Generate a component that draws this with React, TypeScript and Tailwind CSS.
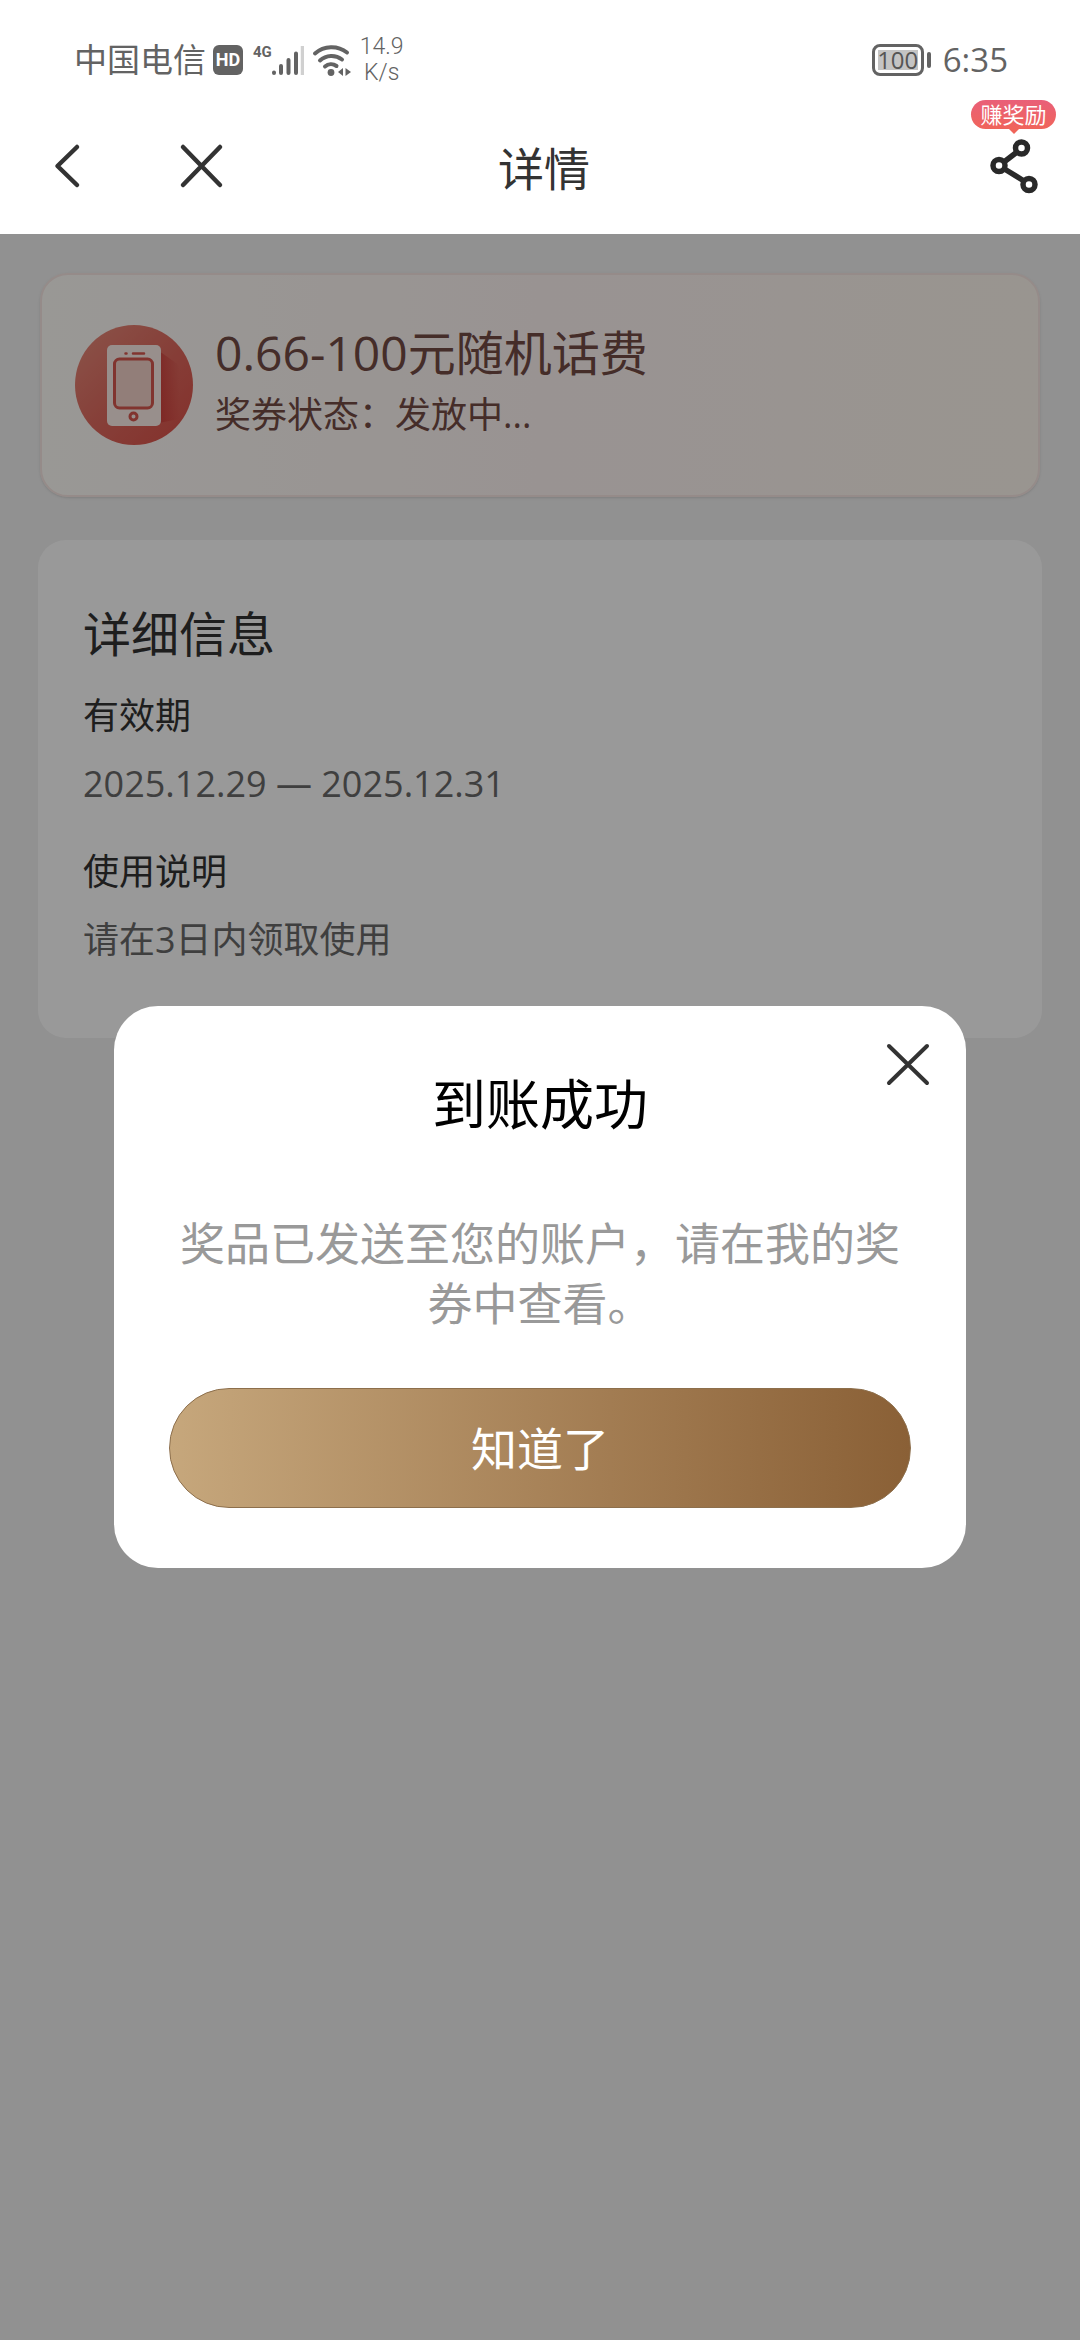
import React, { useState } from "react";

const StatusBar = () => {
  return (
    <div className="flex items-center justify-between h-[120px] pl-[74px] pr-[72px] text-[#636363]">
      <div className="flex items-center">
        <span className="text-[33px] leading-10">中国电信</span>
        <span className="ml-[7px] flex items-center justify-center w-[30px] h-[30px] rounded-md bg-[#636363] font-['Roboto'] text-[18px] leading-5 font-bold text-white">
          HD
        </span>
        <span className="ml-[10px] mb-[16px] font-['Roboto'] text-[15px] leading-4 font-bold">
          4G
        </span>
        <svg className="w-8 h-8" viewBox="0 0 32 32" fill="none">
          <g stroke="#636363" strokeWidth="4" strokeLinecap="round">
            <path d="M2 28.500v.5M9 22v7M16.500 16v13M24 9.500v19.500" />
          </g>
          <path d="M30.500 2v29" stroke="#d0d0d0" strokeWidth="3.500" />
        </svg>
        <svg className="ml-2 w-10 h-8" viewBox="0 0 40 32" fill="none">
          <g stroke="#636363" strokeWidth="4" strokeLinecap="round">
            <path d="M3 9.500a25 25 0 0 1 32-1" />
            <path d="M8 16.500a17 17 0 0 1 22-1" />
            <path d="M13 22.500a9.500 9.500 0 0 1 11.500-.5" />
          </g>
          <circle cx="19" cy="28.500" r="3.400" fill="#636363" />
          <path d="M31 24v8l-5-4zM33.500 24v8l5.500-4z" fill="#636363" />
        </svg>
        <span className="ml-2 font-['Roboto'] text-[23px] leading-[26px] text-center font-light">
          14.9
          <br />
          K/s
        </span>
      </div>
      <div className="flex items-center gap-[12px]">
        <div className="flex items-center gap-[3px]">
          <div className="w-[52px] h-[32px] p-[3px] rounded-lg border-[3px] border-[#636363]">
            <div className="flex items-center justify-center h-full bg-[#c4c4c4] font-['Open_Sans'] text-[24px] leading-5 text-[#555]">
              100
            </div>
          </div>
          <div className="w-1 h-4 rounded-sm bg-[#636363]" />
        </div>
        <span className="font-['Open_Sans'] text-[33px] leading-10">6:35</span>
      </div>
    </div>
  );
};

const NavBar = () => {
  return (
    <nav className="grid grid-cols-[1fr_auto_1fr] items-center h-[114px] pl-[48px] pr-[40px] pb-[22px] text-[#333]">
      <div className="flex items-center gap-[94px]">
        <button aria-label="返回">
          <svg className="w-9 h-12" viewBox="0 0 36 48" fill="none">
            <path
              d="M29 5L9.500 24L29 43"
              stroke="currentColor"
              strokeWidth="4.500"
              strokeLinecap="round"
              strokeLinejoin="round"
            />
          </svg>
        </button>
        <button aria-label="关闭">
          <svg className="w-12 h-12" viewBox="0 0 48 48" fill="none">
            <path
              d="M5 5l37 38M42 5L5 43"
              stroke="currentColor"
              strokeWidth="4.500"
              strokeLinecap="round"
            />
          </svg>
        </button>
      </div>
      <h1 className="pt-1 text-[46px] leading-[64px]">详情</h1>
      <button className="relative justify-self-end" aria-label="分享">
        <svg className="w-[50px] h-14" viewBox="0 0 50 56" fill="none">
          <g stroke="#292929" strokeWidth="5.500">
            <circle cx="31.500" cy="10" r="6" />
            <circle cx="9" cy="27.500" r="6" />
            <circle cx="39" cy="46.500" r="6" />
            <path d="M27 14L14 24M14.500 31l19.500 12" />
          </g>
        </svg>
        <span className="absolute -top-[38px] -right-[16px] w-[85px] h-[29px] rounded-full bg-linear-to-b from-[#e95f78] to-[#f0645a] text-[22px] leading-[29px] text-center text-white">
          赚奖励
          <svg
            className="absolute left-[37px] top-[28px] w-3 h-[6px]"
            viewBox="0 0 12 6"
          >
            <path d="M0 0h12L6 6z" fill="#f0645a" />
          </svg>
        </span>
      </button>
    </nav>
  );
};

const PhoneIcon = () => {
  return (
    <svg className="shrink-0 w-[118px] h-[120px]" viewBox="0 0 118 120">
      <defs>
        <linearGradient id="disc" x1="0" y1="0" x2="1" y2="1">
          <stop offset="0" stopColor="#e88c7c" />
          <stop offset="0.500" stopColor="#e06a5f" />
          <stop offset="1" stopColor="#dc5048" />
        </linearGradient>
        <linearGradient id="shade" x1="0" y1="0" x2="1" y2="0">
          <stop offset="0" stopColor="#c8302f" stopOpacity="0.600" />
          <stop offset="1" stopColor="#c8302f" stopOpacity="0" />
        </linearGradient>
      </defs>
      <ellipse cx="59" cy="60" rx="59" ry="60" fill="url(#disc)" />
      <path d="M84 26l20 14v54l-20 4z" fill="url(#shade)" />
      <rect x="32" y="20" width="54" height="81" rx="5" fill="#fdeeea" />
      <rect
        x="39.500"
        y="34"
        width="38"
        height="49"
        rx="5"
        fill="#f3d3ca"
        stroke="#d8584f"
        strokeWidth="3"
      />
      <path
        d="M58 28.500h11M50.500 28.500h1"
        stroke="#d8584f"
        strokeWidth="2.500"
        strokeLinecap="round"
      />
      <circle
        cx="58.500"
        cy="91.500"
        r="3.500"
        fill="none"
        stroke="#d8584f"
        strokeWidth="3"
      />
    </svg>
  );
};

const CouponCard = () => {
  return (
    <section className="flex items-center mx-[2px] h-[224px] px-[33px] gap-[22px] rounded-[28px] border-2 border-[#f8e8e4] bg-linear-to-r from-[#fffdf9] via-[#fff6f4] to-[#fff8f0] shadow-sm text-[#744b45]">
      <PhoneIcon />
      <div>
        <h2 className="text-[48px] leading-[60px]">0.66-100元随机话费</h2>
        <p className="text-[36px] leading-[64px]">奖券状态：发放中...</p>
      </div>
    </section>
  );
};

const DetailCard = () => {
  return (
    <section className="px-[45px] pt-[60px] pb-[64px] rounded-[28px] bg-white text-[36px] leading-[68px] text-[#333]">
      <h2 className="text-[48px]">详细信息</h2>
      <dl className="mt-[14px]">
        <dt>有效期</dt>
        <dd className="text-[#6a6a6a]">2025.12.29 — 2025.12.31</dd>
        <dt className="mt-[20px]">使用说明</dt>
        <dd className="text-[#6a6a6a]">请在3日内领取使用</dd>
      </dl>
    </section>
  );
};

const ResultModal = ({ callBack }: { callBack: (open: boolean) => void }) => {
  return (
    <div className="absolute inset-0 flex items-center justify-center px-[114px] bg-black/40">
      <div
        role="dialog"
        aria-labelledby="result-title"
        className="relative w-full max-w-[852px] px-[55px] pt-[66px] pb-[60px] rounded-[44px] bg-white text-center"
      >
        <button
          onClick={() => callBack(false)}
          aria-label="关闭弹窗"
          className="absolute top-[35px] right-[34px] text-[#333]"
        >
          <svg className="w-12 h-12" viewBox="0 0 48 48" fill="none">
            <path
              d="M5 5l38 37M43 5L5 42"
              stroke="currentColor"
              strokeWidth="4"
              strokeLinecap="round"
            />
          </svg>
        </button>
        <h2 id="result-title" className="text-[54px] leading-[64px] text-black">
          到账成功
        </h2>
        <p className="mt-[78px] text-[45px] leading-[60px] text-[#999]">
          奖品已发送至您的账户，请在我的奖券中查看。
        </p>
        <button
          onClick={() => callBack(false)}
          className="mt-[54px] w-full h-[120px] rounded-full border border-[#8d6f4c] bg-linear-to-r from-[#c6a77c] to-[#8a6036] text-[46px] leading-[64px] text-white"
        >
          知道了
        </button>
      </div>
    </div>
  );
};

const App = () => {
  const [modal, setModal] = useState(true);

  return (
    <div className="flex flex-col min-h-screen bg-white font-['Open_Sans','Noto_Sans_CJK_SC',sans-serif]">
      <header>
        <StatusBar />
        <NavBar />
      </header>
      <main className="relative flex-1 px-[38px] pt-[39px] bg-[#f2f2f2]">
        <div className="flex flex-col gap-[43px]">
          <CouponCard />
          <DetailCard />
        </div>
        {modal && <ResultModal callBack={setModal} />}
      </main>
    </div>
  );
};

export default App;
